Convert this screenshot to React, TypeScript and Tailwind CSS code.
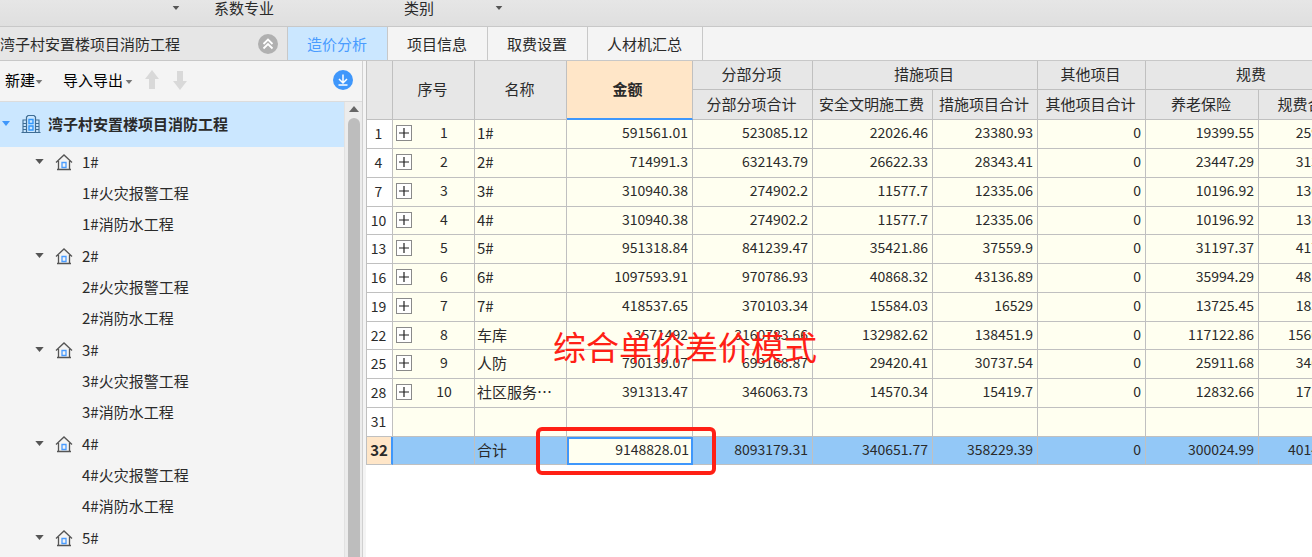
import React from "react";

type Row = { line: number; seq: string; name: string; values: string[] };

const rows: Row[] = [
  { line: 1, seq: "1", name: "1#", values: ["591561.01", "523085.12", "22026.46", "23380.93", "0", "19399.55", "25946.54"] },
  { line: 4, seq: "2", name: "2#", values: ["714991.3", "632143.79", "26622.33", "28343.41", "0", "23447.29", "31359.68"] },
  { line: 7, seq: "3", name: "3#", values: ["310940.38", "274902.2", "11577.7", "12335.06", "0", "10196.92", "13638.15"] },
  { line: 10, seq: "4", name: "4#", values: ["310940.38", "274902.2", "11577.7", "12335.06", "0", "10196.92", "13638.15"] },
  { line: 13, seq: "5", name: "5#", values: ["951318.84", "841239.47", "35421.86", "37559.9", "0", "31197.37", "41725.63"] },
  { line: 16, seq: "6", name: "6#", values: ["1097593.91", "970786.93", "40868.32", "43136.89", "0", "35994.29", "48142.08"] },
  { line: 19, seq: "7", name: "7#", values: ["418537.65", "370103.34", "15584.03", "16529", "0", "13725.45", "18357.45"] },
  { line: 22, seq: "8", name: "车库", values: ["3571492", "3160783.66", "132982.62", "138451.9", "0", "117122.86", "156648.62"] },
  { line: 25, seq: "9", name: "人防", values: ["790139.07", "699168.87", "29420.41", "30737.54", "0", "25911.68", "34656.37"] },
  { line: 28, seq: "10", name: "社区服务…", values: ["391313.47", "346063.73", "14570.34", "15419.7", "0", "12832.66", "17163.38"] },
  { line: 31, seq: "", name: "", values: ["", "", "", "", "", "", ""] },
];

const totals = ["9148828.01", "8093179.31", "340651.77", "358229.39", "0", "300024.99", "401476.05"];

const buildings = ["1#", "2#", "3#", "4#", "5#"];

const tabs = [
  { label: "造价分析", active: true },
  { label: "项目信息", active: false },
  { label: "取费设置", active: false },
  { label: "人材机汇总", active: false },
];

function Caret({ className }: { className: string }) {
  return (
    <svg viewBox="0 0 10 6" className={className} fill="currentColor" aria-hidden="true">
      <path d="M0 0h10L5 6z" />
    </svg>
  );
}

function HouseIcon() {
  return (
    <svg viewBox="0 0 18 18" className="h-[18px] w-[18px] shrink-0" fill="none" aria-hidden="true">
      <path d="M1 9.500 9 2l8 7.500M3.500 8v8.500M14.500 8v8.500M2 16.500h14" stroke="#555" strokeWidth="1.300" />
      <path d="M7 9.500h4v5H7z" stroke="#4a9cff" strokeWidth="1.300" />
    </svg>
  );
}

function BuildingIcon() {
  return (
    <svg viewBox="0 0 20 20" className="h-5 w-5 shrink-0" fill="none" aria-hidden="true">
      <path d="M5.500 18.500V3l1.500-1.500h6L14.500 3v15.500" stroke="#3f6d94" strokeWidth="1.200" />
      <path d="M5.500 6H2v12.500M14.500 6H18v12.500M0.500 18.500h19M2 9.500h3M2 12.500h3M2 15.500h3M15 9.500h3M15 12.500h3M15 15.500h3" stroke="#3f6d94" strokeWidth="1.100" />
      <path d="M8 5.500h4v4H8zM8 12h4v4H8z" stroke="#3296fa" strokeWidth="1.400" />
    </svg>
  );
}

function ArrowIcon({ down }: { down?: boolean }) {
  return (
    <svg viewBox="0 0 14 20" className="h-5 w-3.5" fill="#d9d9d9" aria-hidden="true">
      <path d={down ? "M4 1h6v10h4l-7 9-7-9h4z" : "M4 19h6V9h4L7 0 0 9h4z"} />
    </svg>
  );
}

function TopBar() {
  return (
    <div className="flex h-[27px] items-start border-b border-[#c8c8c8] bg-linear-to-b from-[#e6e6e6] to-[#dfdfdf] leading-4">
      <button type="button" aria-label="展开" className="ml-[172px] flex h-4 items-center text-[#555]">
        <Caret className="h-1 w-2" />
      </button>
      <span className="ml-[34px]">系数专业</span>
      <span className="ml-[130px]">类别</span>
      <button type="button" aria-label="展开类别" className="ml-[61px] flex h-4 items-center text-[#555]">
        <Caret className="h-1 w-2" />
      </button>
    </div>
  );
}

function TabBar() {
  return (
    <div className="flex h-[34px] border-b border-[#c8c8c8] bg-[#f4f4f4]">
      <div className="flex w-[288px] shrink-0 items-center justify-between border-r border-[#c8c8c8] bg-[#e6e6e6] pr-[9px]">
        <span>湾子村安置楼项目消防工程</span>
        <button type="button" aria-label="收起">
          <svg viewBox="0 0 20 20" className="h-5 w-5" fill="none" aria-hidden="true">
            <circle cx="10" cy="10" r="10" fill="#b0b0b0" />
            <path d="m5.500 10 4.500-4.500 4.500 4.500M5.500 14.500 10 10l4.500 4.500" stroke="#fff" strokeWidth="1.800" />
          </svg>
        </button>
      </div>
      {tabs.map((t) => (
        <button
          key={t.label}
          type="button"
          className={
            t.active
              ? "border-r border-[#c8c8c8] bg-[#cbe7ff] pr-5 pl-[19px] text-[#4a9cff]"
              : "border-r border-[#c8c8c8] pr-5 pl-[19px]"
          }
        >
          {t.label}
        </button>
      ))}
    </div>
  );
}

function Sidebar() {
  return (
    <aside className="flex w-[363px] shrink-0 flex-col border-r border-[#d0d0d0] bg-[#f4f4f4]">
      <div className="flex h-[41px] shrink-0 items-center border-b border-[#dcdcdc] pr-[9px] pb-0.5 pl-[5px] text-black">
        <button type="button" className="flex items-center">
          新建
          <Caret className="mt-1 h-1 w-2 text-[#777]" />
        </button>
        <button type="button" className="ml-5 flex items-center">
          导入导出
          <Caret className="mt-1 ml-0.5 h-1 w-2 text-[#777]" />
        </button>
        <button type="button" aria-label="上移" className="ml-3">
          <ArrowIcon />
        </button>
        <button type="button" aria-label="下移" className="ml-3.5">
          <ArrowIcon down />
        </button>
        <button type="button" aria-label="下载" className="ml-auto">
          <svg viewBox="0 0 20 20" className="h-5 w-5" fill="none" aria-hidden="true">
            <circle cx="10" cy="10" r="10" fill="#3f97fb" />
            <path d="M10 4.500v8.500M6 9l4 4 4-4M5.500 15h9" stroke="#fff" strokeWidth="1.500" />
          </svg>
        </button>
      </div>
      <div className="flex min-h-0 flex-1">
        <div className="min-w-0 flex-1 overflow-hidden">
          <div className="flex h-[45px] items-center bg-[#cbe7ff] pb-0.5 pl-0.5 font-bold">
            <Caret className="h-[5px] w-2 text-[#3f97fb]" />
            <span className="ml-[11px] flex">
              <BuildingIcon />
            </span>
            <span className="ml-[7px]">湾子村安置楼项目消防工程</span>
          </div>
          <ul className="space-y-px">
            {buildings.map((b) => (
              <li key={b}>
                <div className="flex h-[31px] items-center pb-0.5 pl-[35px]">
                  <Caret className="h-[5px] w-[9px] text-[#555]" />
                  <span className="ml-[11px] flex">
                    <HouseIcon />
                  </span>
                  <span className="ml-[9px]">{b}</span>
                </div>
                <div className="flex h-[31px] items-center pb-0.5 pl-[82px]">{b}火灾报警工程</div>
                <div className="flex h-[31px] items-center pb-0.5 pl-[82px]">{b}消防水工程</div>
              </li>
            ))}
          </ul>
        </div>
        <div className="flex w-[18px] flex-col items-center border-l border-[#e2e2e2] bg-[#ececec] pt-1">
          <Caret className="h-1.5 w-2.5 rotate-180 text-[#666]" />
          <div className="mt-1.5 w-3 flex-1 rounded-t-md bg-[#bdbdbd]" />
        </div>
      </div>
    </aside>
  );
}

const head = "border-b border-r border-[#c0c0c0] bg-[#e7e7e7] p-0 pr-0.5 pb-0.5 text-center font-normal";
const cell = "border-b border-r border-[#c0c0c0] p-0";
const nameCell = "border-b border-r border-[#c0c0c0] p-0 pb-0.5 pl-0.5";
const valueCell = "border-b border-r border-[#c0c0c0] p-0 pr-1 pb-1 text-right text-sm";

function CostTable() {
  return (
    <table className="w-[993px] table-fixed border-separate border-spacing-0 border-l border-[#c0c0c0] whitespace-nowrap">
      <colgroup>
        <col className="w-[26px]" />
        <col className="w-[82px]" />
        <col className="w-[92px]" />
        <col className="w-[126px]" />
        <col className="w-[120px]" />
        <col className="w-[120px]" />
        <col className="w-[105px]" />
        <col className="w-[108px]" />
        <col className="w-[113px]" />
        <col className="w-[100px]" />
      </colgroup>
      <thead>
        <tr className="h-[29px]">
          <th rowSpan={2} className={head} aria-label="行号" />
          <th rowSpan={2} className={head}>序号</th>
          <th rowSpan={2} className={head}>名称</th>
          <th rowSpan={2} className="border-r border-b-2 border-r-[#c0c0c0] border-b-[#3f97fb] bg-[#ffe6c8] p-0 pr-1 pb-0.5 font-bold">金额</th>
          <th className={head}>分部分项</th>
          <th colSpan={2} className={head}>措施项目</th>
          <th className={head}>其他项目</th>
          <th colSpan={2} className={head}>规费</th>
        </tr>
        <tr className="h-[30px]">
          <th className={head}>分部分项合计</th>
          <th className={head}>安全文明施工费</th>
          <th className={head}>措施项目合计</th>
          <th className={head}>其他项目合计</th>
          <th className={head}>养老保险</th>
          <th className={head}>规费合计</th>
        </tr>
      </thead>
      <tbody className="leading-5">
        {rows.map((r) => (
          <tr key={r.line} className="h-[29px] bg-[#fffff0] nth-[4n]:h-7">
            <th scope="row" className="border-b border-r border-[#c0c0c0] bg-white p-0 pr-0.5 pb-0.5 text-center text-sm font-normal">{r.line}</th>
            <td className={cell}>
              {r.seq && (
                <div className="flex items-center pb-0.5 pl-[3px]">
                  <button type="button" aria-label="展开行" className="flex h-4 w-4 shrink-0 items-center justify-center border border-[#8a8a8a] bg-white">
                    <svg viewBox="0 0 10 10" className="h-2.5 w-2.5" stroke="#222" strokeWidth="1.200" aria-hidden="true">
                      <path d="M5 0v10M0 5h10" />
                    </svg>
                  </button>
                  <span className="flex-1 pb-0.5 pl-0.5 text-center text-sm">{r.seq}</span>
                </div>
              )}
            </td>
            <td className={nameCell}>{r.name}</td>
            {r.values.map((v, i) => (
              <td key={i} className={valueCell}>{v}</td>
            ))}
          </tr>
        ))}
        <tr className="h-7 bg-[#93c8f7]">
          <th scope="row" className="border-b border-r-2 border-b-[#c0c0c0] border-r-[#3f97fb] bg-[#ffe6c8] p-0 pb-0.5 text-center font-bold">32</th>
          <td className={cell} />
          <td className={nameCell}>合计</td>
          {totals.map((v, i) => (
            <td
              key={i}
              className={
                i === 0
                  ? "border-2 border-[#3f97fb] bg-[#fffff0] p-0 pr-0.5 pb-1 text-right text-sm"
                  : valueCell
              }
            >
              {v}
            </td>
          ))}
        </tr>
      </tbody>
    </table>
  );
}

export default function App() {
  return (
    <div className="flex h-screen flex-col overflow-hidden bg-white font-['Noto_Sans_CJK_SC',sans-serif] text-[15px] leading-5 text-[#2a2a2a]">
      <TopBar />
      <TabBar />
      <div className="flex min-h-0 flex-1">
        <Sidebar />
        <main className="min-w-0 flex-1 overflow-hidden border-l-3 border-[#f4f4f4]">
          <div className="relative">
            <CostTable />
            <div className="absolute top-[366px] left-[170px] h-12 w-[180px] rounded-md border-4 border-[#ff2015]" />
            <p className="absolute top-[265px] left-[187px] text-[33px] leading-10 font-normal whitespace-nowrap text-[#ff2015]">综合单价差价模式</p>
          </div>
        </main>
      </div>
    </div>
  );
}
